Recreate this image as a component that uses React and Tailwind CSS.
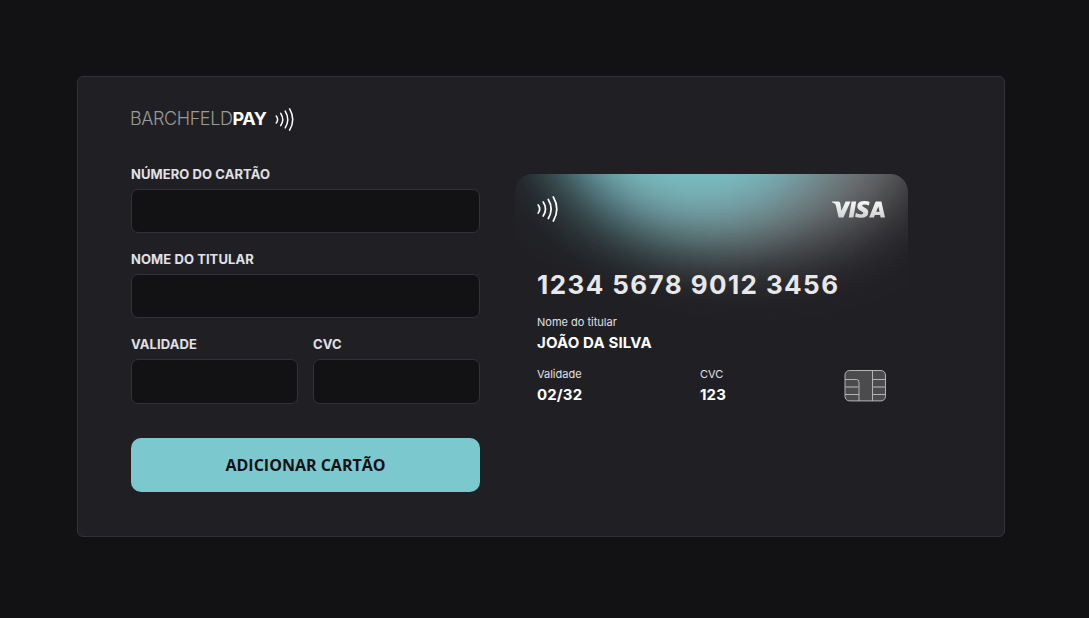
import React from "react";

function Waves({ className }) {
  return (
    <svg className={className} viewBox="0 0 21 26" fill="none" stroke="white" strokeWidth="1.7" strokeLinecap="round">
      <path d="M1.2 9Q4.2 13 1.2 17" />
      <path d="M6.2 6Q10.8 13 6.2 20" />
      <path d="M11.3 3.5Q17 13 11.3 22.5" />
      <path d="M16.3 1Q23.3 13 16.3 25" />
    </svg>
  );
}

function Chip() {
  return (
    <svg className="h-8 w-[43px]" viewBox="0 0 43 32" fill="none" stroke="#b4b4b5" strokeWidth="1">
      <rect x="1" y="0.5" width="40.5" height="30.4" rx="4.5" fill="#4b4b4d" />
      <path d="M1 9.5H12.5Q15 9.5 15 12V31M1 24.5H15M28.5 1V31M28.5 9.5H41.5M28.5 24.5H41.5" />
      <path d="M1 17H15M28.5 17H41.5" strokeWidth="1.4" stroke="#98989a" />
    </svg>
  );
}

function Visa() {
  return (
    <svg className="mr-px h-[17px] w-[53px]" viewBox="0 0 53 17">
      <defs>
        <linearGradient id="visa" x1="0" y1="0" x2="0" y2="1">
          <stop stopColor="#f7f7f7" />
          <stop offset="1" stopColor="#d2d2d2" />
        </linearGradient>
      </defs>
      <g fill="url(#visa)">
        <path d="M0 .5H6.2Q8 .5 8.3 2.2L9.4 9.8L13.6 .5H18.6L11.4 16.5H6.6L3.9 4.4Q3.4 2.8 2.1 2.2Q1 1.6 0 1.3Z" />
        <path d="M19.6 .5H24.2L21.4 16.5H16.8Z" />
        <path d="M37.6 1L36.9 4.5Q34.6 3.5 32.6 3.5Q30.2 3.5 30.2 4.6Q30.2 5.5 32.5 6.5Q36.3 8.2 36.3 11Q36.3 16.8 28.8 16.8Q25.4 16.8 23.1 15.8L23.8 12.1Q26.6 13.4 29 13.4Q31.3 13.4 31.3 12.1Q31.3 11.1 28.9 10Q25.3 8.3 25.3 5.5Q25.3 .1 32.9 .1Q35.7 .1 37.6 1Z" />
        <path fillRule="evenodd" d="M44.3 .5H49.4L53 16.5H48.6L48.1 14H42.9L41.9 16.5H37.1L43 1.9Q43.5 .5 44.3 .5ZM46.4 5.4L44.2 10.7H47.5Z" />
      </g>
    </svg>
  );
}

function Field({ label, inputHeight = "h-[44px]" }) {
  return (
    <label className="flex min-w-0 flex-1 flex-col">
      <span className="h-[23px] text-[13px] leading-[16px] font-bold tracking-[0.08px] text-[#e1e1e6]">{label}</span>
      <input className={`${inputHeight} w-full rounded-[7px] border border-[#323238] bg-[#121214] px-3 text-white outline-none`} />
    </label>
  );
}

function Detail({ label, value, className }) {
  return (
    <div className={className}>
      <div className="text-[11px] leading-4 text-[#e1e1e6]">{label}</div>
      <div className="mt-[3px] mb-px text-[15px] leading-5 font-bold tracking-[0.15px] text-white">{value}</div>
    </div>
  );
}

export default function App() {
  return (
    <main className="h-[618px] overflow-hidden bg-[#121214] pt-[76px] pl-[77px] font-['Inter',sans-serif]">
      <section className="h-[461px] w-[928px] rounded-md border border-[#323238] bg-[#202024] pt-[30px] pl-[53px]">
        <header className="-ml-px flex h-6 items-center">
          <span className="text-[18px] leading-6 font-light tracking-[-0.4px] text-[#9a9a9a]">
            BARCHFELD<b className="font-bold text-white">PAY</b>
          </span>
          <Waves className="ml-[8px] h-[23px] w-[19px]" />
        </header>
        <div className="mt-[35px] flex gap-[35px]">
          <form className="flex w-[349px] flex-col">
            <div className="flex h-[85px]"><Field label="NÚMERO DO CARTÃO" /></div>
            <div className="flex h-[85px]"><Field label="NOME DO TITULAR" /></div>
            <div className="flex h-[102px] gap-[15px]">
              <Field label="VALIDADE" inputHeight="h-[45px]" />
              <Field label="CVC" inputHeight="h-[45px]" />
            </div>
            <button type="button" className="h-[54px] rounded-[10px] bg-[#7cc8cf] font-['Open_Sans','Noto_Sans',sans-serif] text-[16px] font-bold text-[#121214]">
              ADICIONAR CARTÃO
            </button>
          </form>
          <article className="relative mt-2 h-[250px] w-[393px] overflow-hidden rounded-[18px] bg-[#202024]">
            <div className="absolute inset-0 bg-[radial-gradient(ellipse_155px_115px_at_160px_0px,#1e2d32_0%,#222a2e_60%,#232528_82%,#202024_100%)]" />
            <div className="absolute -top-[120px] left-[95px] h-[196px] w-[310px] rotate-[-3deg] rounded-[50%] bg-[#6e6e6f] blur-[32px]" />
            <div className="absolute -top-[175px] left-[35px] h-[222px] w-[280px] rotate-[4deg] rounded-[50%] bg-[#7ac4cc] blur-[36px]" />
            <div className="relative flex h-full flex-col pt-[22px] pr-[22px] pl-[22px]">
              <div className="flex h-[26px] items-center justify-between">
                <Waves className="h-[26px] w-[21px]" />
                <Visa />
              </div>
              <div className="mt-[47px] h-8 text-[26px] leading-8 font-bold tracking-[1.42px] whitespace-nowrap text-[#e8e8e8]">1234 5678 9012 3456</div>
              <Detail className="mt-[13px]" label="Nome do titular" value="JOÃO DA SILVA" />
              <div className="mt-3 -mr-2 flex">
                <Detail className="w-[163px] shrink-0" label="Validade" value="02/32" />
                <Detail className="w-[144px] shrink-0" label="CVC" value="123" />
                <div className="mt-1 shrink-0"><Chip /></div>
              </div>
            </div>
          </article>
        </div>
      </section>
    </main>
  );
}
